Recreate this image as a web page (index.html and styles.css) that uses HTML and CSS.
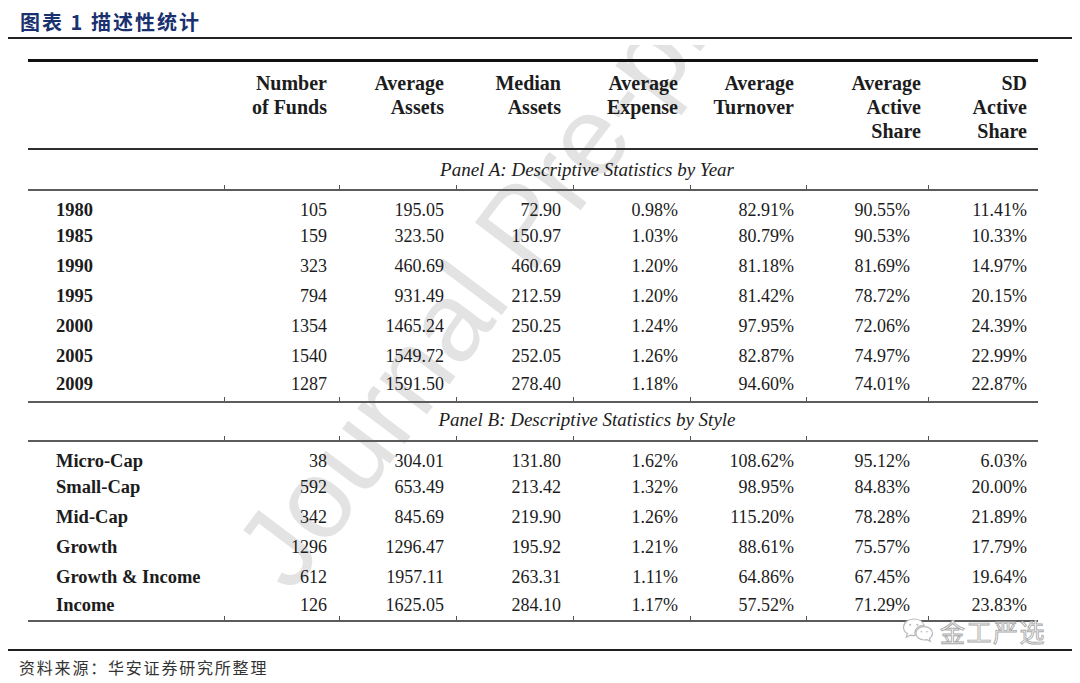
FILE: index.html
```html
<!DOCTYPE html>
<html lang="zh">
<head>
<meta charset="utf-8">
<title>图表 1 描述性统计</title>
<link rel="stylesheet" href="styles.css">
</head>
<body>
<div class="page">
  <div class="title">图表 1 描述性统计</div>
  <div class="title-rule"></div>
  <div class="figure">
    <div class="sheet">
      <div class="watermark">Journal Pre-proof</div>
      <div class="tbl">
        <div class="row head rule-top">
          <div class="c lab"></div>
          <div class="c">Number<br>of Funds</div>
          <div class="c">Average<br>Assets</div>
          <div class="c">Median<br>Assets</div>
          <div class="c">Average<br>Expense</div>
          <div class="c">Average<br>Turnover</div>
          <div class="c c6">Average<br>Active<br>Share</div>
          <div class="c c7">SD<br>Active<br>Share</div>
        </div>
        <div class="row panel panel-a tick"><span class="ptxt">Panel A: Descriptive Statistics by Year</span>
          <i class="t t1"></i><i class="t t2"></i><i class="t t3"></i><i class="t t4"></i><i class="t t5"></i><i class="t t6"></i><i class="t t7"></i>
        </div>
        <div class="row data h26"><div class="c lab">1980</div><div class="c">105</div><div class="c">195.05</div><div class="c">72.90</div><div class="c">0.98%</div><div class="c">82.91%</div><div class="c c6">90.55%</div><div class="c c7">11.41%</div></div>
        <div class="row data h30"><div class="c lab">1985</div><div class="c">159</div><div class="c">323.50</div><div class="c">150.97</div><div class="c">1.03%</div><div class="c">80.79%</div><div class="c c6">90.53%</div><div class="c c7">10.33%</div></div>
        <div class="row data h30"><div class="c lab">1990</div><div class="c">323</div><div class="c">460.69</div><div class="c">460.69</div><div class="c">1.20%</div><div class="c">81.18%</div><div class="c c6">81.69%</div><div class="c c7">14.97%</div></div>
        <div class="row data h30"><div class="c lab">1995</div><div class="c">794</div><div class="c">931.49</div><div class="c">212.59</div><div class="c">1.20%</div><div class="c">81.42%</div><div class="c c6">78.72%</div><div class="c c7">20.15%</div></div>
        <div class="row data h30"><div class="c lab">2000</div><div class="c">1354</div><div class="c">1465.24</div><div class="c">250.25</div><div class="c">1.24%</div><div class="c">97.95%</div><div class="c c6">72.06%</div><div class="c c7">24.39%</div></div>
        <div class="row data h28"><div class="c lab">2005</div><div class="c">1540</div><div class="c">1549.72</div><div class="c">252.05</div><div class="c">1.26%</div><div class="c">82.87%</div><div class="c c6">74.97%</div><div class="c c7">22.99%</div></div>
        <div class="row data h38 ruled tick"><div class="c lab">2009</div><div class="c">1287</div><div class="c">1591.50</div><div class="c">278.40</div><div class="c">1.18%</div><div class="c">94.60%</div><div class="c c6">74.01%</div><div class="c c7">22.87%</div>
          <i class="t t1"></i><i class="t t2"></i><i class="t t3"></i><i class="t t4"></i><i class="t t5"></i><i class="t t6"></i><i class="t t7"></i>
        </div>
        <div class="row panel panel-b tick"><span class="ptxt">Panel B: Descriptive Statistics by Style</span>
          <i class="t t1"></i><i class="t t2"></i><i class="t t3"></i><i class="t t4"></i><i class="t t5"></i><i class="t t6"></i><i class="t t7"></i>
        </div>
        <div class="row data h26"><div class="c lab">Micro-Cap</div><div class="c">38</div><div class="c">304.01</div><div class="c">131.80</div><div class="c">1.62%</div><div class="c">108.62%</div><div class="c c6">95.12%</div><div class="c c7">6.03%</div></div>
        <div class="row data h30"><div class="c lab">Small-Cap</div><div class="c">592</div><div class="c">653.49</div><div class="c">213.42</div><div class="c">1.32%</div><div class="c">98.95%</div><div class="c c6">84.83%</div><div class="c c7">20.00%</div></div>
        <div class="row data h30"><div class="c lab">Mid-Cap</div><div class="c">342</div><div class="c">845.69</div><div class="c">219.90</div><div class="c">1.26%</div><div class="c">115.20%</div><div class="c c6">78.28%</div><div class="c c7">21.89%</div></div>
        <div class="row data h30"><div class="c lab">Growth</div><div class="c">1296</div><div class="c">1296.47</div><div class="c">195.92</div><div class="c">1.21%</div><div class="c">88.61%</div><div class="c c6">75.57%</div><div class="c c7">17.79%</div></div>
        <div class="row data h28"><div class="c lab">Growth &amp; Income</div><div class="c">612</div><div class="c">1957.11</div><div class="c">263.31</div><div class="c">1.11%</div><div class="c">64.86%</div><div class="c c6">67.45%</div><div class="c c7">19.64%</div></div>
        <div class="row data h36 ruled tick"><div class="c lab">Income</div><div class="c">126</div><div class="c">1625.05</div><div class="c">284.10</div><div class="c">1.17%</div><div class="c">57.52%</div><div class="c c6">71.29%</div><div class="c c7">23.83%</div>
          <i class="t t1"></i><i class="t t2"></i><i class="t t3"></i><i class="t t4"></i><i class="t t5"></i><i class="t t6"></i><i class="t t7"></i>
        </div>
      </div>
    </div>
  </div>
  <div class="bottom-rule"></div>
  <div class="source">资料来源：华安证券研究所整理</div>
  <div class="wx">
    <svg class="wx-icon" width="32" height="28" viewBox="0 0 32 28">
      <path d="M12 2 C5.9 2 1.5 5.8 1.5 10.3 C1.5 13 3 15.2 5.3 16.6 L4.3 20.2 L8.4 18.1 C9.6 18.5 10.8 18.6 12 18.6 C12.4 18.6 12.8 18.6 13.2 18.5 C12.9 17.7 12.8 16.9 12.8 16 C12.8 11.7 17 8.3 22.1 8.3 C21 4.6 16.9 2 12 2 Z" fill="#fff" stroke="#b9b9b9" stroke-width="1.2"/>
      <path d="M22.2 9.6 C17.6 9.6 13.9 12.6 13.9 16.3 C13.9 20 17.6 23 22.2 23 C23.1 23 24 22.9 24.9 22.6 L28.3 24.4 L27.4 21.4 C29.3 20.2 30.5 18.4 30.5 16.3 C30.5 12.6 26.8 9.6 22.2 9.6 Z" fill="#fff" stroke="#b9b9b9" stroke-width="1.2"/>
      <circle cx="8.2" cy="7.8" r="1.1" fill="#bdbdbd"/>
      <circle cx="15.4" cy="7.8" r="1.1" fill="#bdbdbd"/>
      <circle cx="19.4" cy="14.6" r="0.9" fill="#c4c4c4"/>
      <circle cx="25" cy="14.6" r="0.9" fill="#c4c4c4"/>
    </svg>
    <span class="wx-text">金工严选</span>
  </div>
</div>
</body>
</html>
```

FILE: styles.css
```css
html, body {
  margin: 0;
  padding: 0;
  background: #ffffff;
}

.page {
  position: relative;
  width: 1080px;
  height: 683px;
  overflow: hidden;
}

.title {
  padding: 8px 0 0 20px;
  line-height: 28px;
  height: 28px;
  font-family: "Noto Sans CJK SC", "Noto Sans", sans-serif;
  font-weight: 700;
  font-size: 20px;
  letter-spacing: 2px;
  color: #1a3170;
}

.title-rule {
  margin: 1px 8px 0 8px;
  height: 2px;
  background: #222;
}

.figure {
  padding-top: 6px;
}

.sheet {
  position: relative;
  overflow: hidden;
  padding: 14px 0 27px 28px;
}

.watermark {
  position: absolute;
  left: 292px;
  top: 455px;
  font-family: "Liberation Sans", Arial, sans-serif;
  font-size: 112px;
  line-height: 1;
  white-space: nowrap;
  color: #e3e3e3;
  transform-origin: 0 95px;
  transform: rotate(-53deg);
}

.tbl {
  position: relative;
  width: 1010px;
  border-top: 3px solid #111;
  font-family: "Liberation Serif", "Times New Roman", serif;
  font-size: 18px;
  color: #1c1c1c;
}

.row {
  position: relative;
  display: grid;
  grid-template-columns: 196px 115px 117px 117px 117px 116px 122px 110px;
  box-sizing: border-box;
}

.c {
  text-align: right;
  padding-right: 12px;
  white-space: nowrap;
}

.c.lab {
  text-align: left;
  padding-left: 28px;
  padding-right: 0;
  font-weight: 700;
  font-size: 18.5px;
}

.c.c6 { padding-right: 18px; }
.c.c7 { padding-right: 11px; }

.head {
  padding: 9px 0 5px;
  line-height: 24px;
  font-size: 20px;
  font-weight: 700;
  border-bottom: 2px solid #2e2e2e;
}

.head .c.c6 { padding-right: 7px; }

.panel {
  display: block;
  box-sizing: border-box;
  height: 41px;
  font-style: italic;
  font-size: 19px;
  text-align: center;
  padding-left: 108px;
  border-bottom: 2px solid #5c5c5c;
}

.panel-a { line-height: 39px; }
.panel-b { height: 39px; line-height: 34px; }

.data {
  padding-top: 9px;
  line-height: 20px;
}

.h26 { height: 26px; }
.h28 { height: 28px; }
.h30 { height: 30px; }
.h36 { height: 36px; }
.h38 { height: 38px; }

.ruled {
  border-bottom: 2px solid #5c5c5c;
}

.t {
  position: absolute;
  bottom: 0;
  width: 1px;
  height: 4px;
  background: #555;
}

.t1 { left: 196px; }
.t2 { left: 311px; }
.t3 { left: 428px; }
.t4 { left: 545px; }
.t5 { left: 662px; }
.t6 { left: 778px; }
.t7 { left: 900px; }

.bottom-rule {
  margin: 0 8px;
  height: 2px;
  background: #1e1e1e;
}

.source {
  margin-top: 5px;
  padding-left: 19px;
  line-height: 22px;
  font-family: "Noto Sans CJK SC", "Noto Sans", sans-serif;
  font-size: 16px;
  letter-spacing: 1.8px;
  color: #333;
}

.wx {
  position: absolute;
  left: 902px;
  top: 616px;
  display: flex;
  align-items: center;
  gap: 6px;
}

.wx-icon {
  display: block;
}

.wx-text {
  font-family: "Noto Sans CJK SC", "Noto Sans", sans-serif;
  font-size: 25px;
  line-height: 30px;
  letter-spacing: 1.5px;
  color: #ffffff;
  -webkit-text-stroke: 0.9px #a9a9a9;
}
```
